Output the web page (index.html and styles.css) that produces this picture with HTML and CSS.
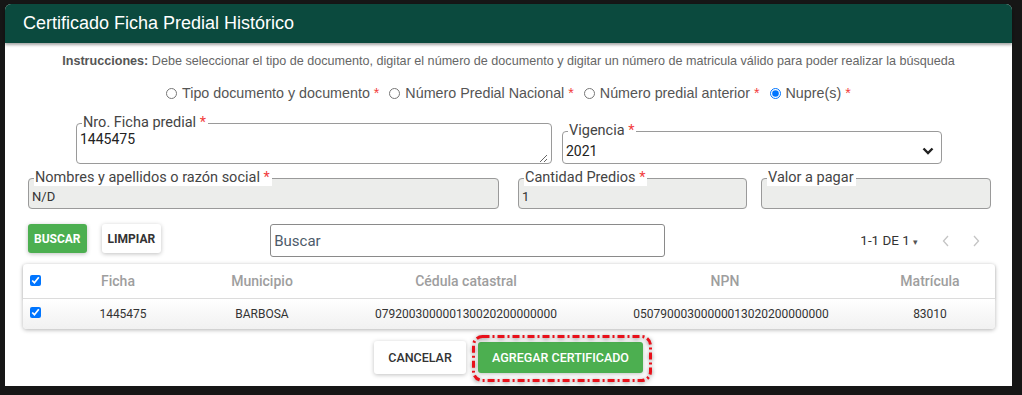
FILE: index.html
```html
<!DOCTYPE html>
<html lang="es">
<head>
    <meta charset="UTF-8">
    <meta name="viewport" content="width=device-width, initial-scale=1.0">
    <title>Certificado Ficha Predial Histórico</title>
    <link rel="stylesheet" href="styles.css">
</head>
<body>
    <div class="dialog">
        <div class="dialog-header">Certificado Ficha Predial Histórico</div>

        <div class="instructions">
            <b>Instrucciones:</b> Debe seleccionar el tipo de documento, digitar el número de documento y digitar un número de matricula válido para poder realizar la búsqueda
        </div>

        <div class="radio-row">
            <label><input type="radio" name="tipo"> Tipo documento y documento <span class="req">*</span></label>
            <label><input type="radio" name="tipo"> Número Predial Nacional <span class="req">*</span></label>
            <label><input type="radio" name="tipo"> Número predial anterior <span class="req">*</span></label>
            <label><input type="radio" name="tipo" checked> Nupre(s) <span class="req">*</span></label>
        </div>

        <div class="field-row first">
            <fieldset class="field ficha">
                <legend>Nro. Ficha predial <span class="req">*</span></legend>
                <textarea class="field-text">1445475</textarea>
            </fieldset>
            <fieldset class="field vigencia">
                <legend>Vigencia <span class="req">*</span></legend>
                <div class="select">
                    <span>2021</span>
                    <svg width="12" height="8" viewBox="0 0 12 8"><path d="M1.5 1.5 L6 6 L10.5 1.5" fill="none" stroke="#222" stroke-width="2.4"/></svg>
                </div>
            </fieldset>
        </div>

        <div class="field-row second">
            <fieldset class="field readonly nombres">
                <legend>Nombres y apellidos o razón social <span class="req">*</span></legend>
                <div class="value">N/D</div>
            </fieldset>
            <fieldset class="field readonly cantidad">
                <legend>Cantidad Predios <span class="req">*</span></legend>
                <div class="value">1</div>
            </fieldset>
            <fieldset class="field readonly valor">
                <legend>Valor a pagar</legend>
                <div class="value"></div>
            </fieldset>
        </div>

        <div class="toolbar">
            <button class="btn btn-green">BUSCAR</button>
            <button class="btn btn-white">LIMPIAR</button>
            <input class="search" type="text" placeholder="Buscar">
            <div class="pager">
                <span>1-1 DE 1 <small>▾</small></span>
                <svg width="10" height="14" viewBox="0 0 10 14"><path d="M7 2 L2.5 7 L7 12" fill="none" stroke="#c4c4c4" stroke-width="1.3"/></svg>
                <svg width="10" height="14" viewBox="0 0 10 14"><path d="M3 2 L7.5 7 L3 12" fill="none" stroke="#c4c4c4" stroke-width="1.3"/></svg>
            </div>
        </div>

        <div class="results">
            <div class="results-row head">
                <div><input type="checkbox" checked></div>
                <div>Ficha</div>
                <div>Municipio</div>
                <div>Cédula catastral</div>
                <div class="col-npn">NPN</div>
                <div>Matrícula</div>
            </div>
            <div class="results-row data">
                <div><input type="checkbox" checked></div>
                <div class="col-ficha">1445475</div>
                <div>BARBOSA</div>
                <div>079200300000130020200000000</div>
                <div>05079000300000013020200000000</div>
                <div>83010</div>
            </div>
        </div>

        <div class="actions">
            <button class="btn btn-white big">CANCELAR</button>
            <span class="highlight">
                <button class="btn btn-green big">AGREGAR CERTIFICADO</button>
                <svg class="dash" width="180" height="47" viewBox="0 0 180 47"><rect x="1.5" y="1.5" width="177" height="44" rx="9" fill="none" stroke="#e8101a" stroke-width="3" stroke-dasharray="7 3 2 3"/></svg>
            </span>
        </div>
    </div>
</body>
</html>
```

FILE: styles.css
```css
body {
    margin: 0;
    padding: 4px 0 0 5px;
    background-color: #161616;
    font-family: 'Liberation Sans', Arial, sans-serif;
}
.dialog {
    width: 1007px;
    height: 382px;
    background: white;
    border-radius: 6px 6px 0 0;
    display: flex;
    flex-direction: column;
}
.dialog-header {
    height: 39px;
    line-height: 39px;
    padding-left: 18px;
    background: #0b4a3e;
    color: white;
    font-size: 18px;
    border-radius: 6px 6px 0 0;
    box-shadow: 0 2px 3px rgba(0,0,0,0.35);
}
.instructions {
    margin-top: 10px;
    text-align: center;
    font-size: 12.6px;
    line-height: 16px;
    color: #666;
}
.instructions b {
    color: #555;
}
.radio-row {
    margin-top: 15px;
    display: flex;
    justify-content: center;
    gap: 10px;
    font-size: 14.3px;
    line-height: 18px;
    color: #555;
}
.radio-row input {
    width: 11px;
    height: 11px;
    margin: 0 1px 0 0;
    vertical-align: -1px;
}
.req {
    color: #f23b3b;
}
.field-row {
    display: flex;
    align-items: flex-end;
    font-family: Roboto, sans-serif;
}
.field-row.first {
    margin-top: 13px;
    justify-content: center;
    gap: 10px;
    padding-left: 1px;
}
.field-row.second {
    margin-top: 6px;
    padding-left: 23px;
}
.field {
    margin: 0;
    padding: 0 3px;
    border: 1px solid #9a9a9a;
    border-radius: 4px;
    min-width: 0;
}
.field legend {
    margin-left: 2px;
    padding: 0 2px 0 1px;
    font-size: 14.5px;
    line-height: 16px;
    color: #444;
    background: white;
}
.ficha {
    width: 468px;
}
.field-text {
    display: block;
    width: 100%;
    height: 32px;
    padding: 0;
    border: none;
    font-family: Roboto, sans-serif;
    font-size: 14px;
    line-height: 16px;
    color: #222;
    outline: none;
}
.vigencia {
    width: 372px;
}
.select {
    height: 24px;
    display: flex;
    align-items: center;
    justify-content: space-between;
    padding-right: 4px;
    font-size: 14px;
    color: #222;
}
.readonly {
    background: #ecedeb;
}
.readonly .value {
    height: 22px;
    line-height: 22px;
    font-size: 13px;
    color: #333;
}
.nombres {
    width: 463px;
}
.cantidad {
    width: 221px;
    margin-left: 19px;
}
.valor {
    width: 222px;
    margin-left: 14px;
}
.toolbar {
    margin-top: 15px;
    padding-left: 23px;
    display: flex;
    align-items: flex-start;
    font-family: Roboto, sans-serif;
}
.btn {
    border: none;
    border-radius: 3px;
    font-family: Roboto, sans-serif;
    font-weight: 700;
    font-size: 12px;
    height: 29px;
    padding: 0 6px;
    box-shadow: 0 1px 4px rgba(0,0,0,0.25);
}
.btn-green {
    background: #4caf50;
    color: white;
}
.btn-white {
    background: white;
    color: #333;
    margin-left: 15px;
}
.search {
    margin-left: 109px;
    width: 395px;
    height: 33px;
    box-sizing: border-box;
    border: 1px solid #8a8a8a;
    border-radius: 3px;
    padding: 0 3px;
    font-family: Roboto, sans-serif;
    font-size: 15px;
}
.search::placeholder {
    color: #4d5b6a;
}
.pager {
    margin-left: auto;
    margin-right: 31px;
    height: 33px;
    display: flex;
    align-items: center;
    gap: 20px;
    font-size: 13.4px;
    color: #333;
}
.pager span {
    margin-right: 3px;
}
.pager small {
    font-size: 9px;
    color: #555;
}
.results {
    margin: 7px 17px 0 18px;
    border-radius: 4px;
    box-shadow: 0 1px 4px rgba(0,0,0,0.3);
    font-family: Roboto, sans-serif;
}
.results-row {
    display: grid;
    grid-template-columns: 24px 142px 146px 262px 268px 1fr;
    align-items: center;
    text-align: center;
}
.results-row input {
    width: 11px;
    height: 11px;
    margin: 0;
}
.results-row.head {
    height: 34px;
    font-size: 14px;
    font-weight: 500;
    color: #9e9e9e;
    border-bottom: 1px solid #dcdcdc;
    box-shadow: 0 1px 2px rgba(0,0,0,0.12);
}
.head .col-npn {
    padding-right: 12px;
}
.results-row.data {
    height: 30px;
    font-size: 12px;
    color: #333;
    background: linear-gradient(#ffffff, #f1f1f1);
    border-radius: 0 0 4px 4px;
}
.data .col-ficha {
    padding-left: 10px;
}
.actions {
    margin-top: 12px;
    display: flex;
    justify-content: center;
    align-items: flex-start;
    gap: 12px;
}
.btn.big {
    height: 33px;
    font-size: 12.5px;
    font-weight: 500;
}
.btn-white.big {
    margin-left: 0;
    width: 92px;
}
.highlight {
    position: relative;
    display: inline-block;
}
.btn-green.big {
    margin-top: 1px;
    height: 31px;
    width: 165px;
}
.dash {
    position: absolute;
    left: -6px;
    top: -6px;
    filter: drop-shadow(0 1px 2px rgba(0,0,0,0.5));
}
```
